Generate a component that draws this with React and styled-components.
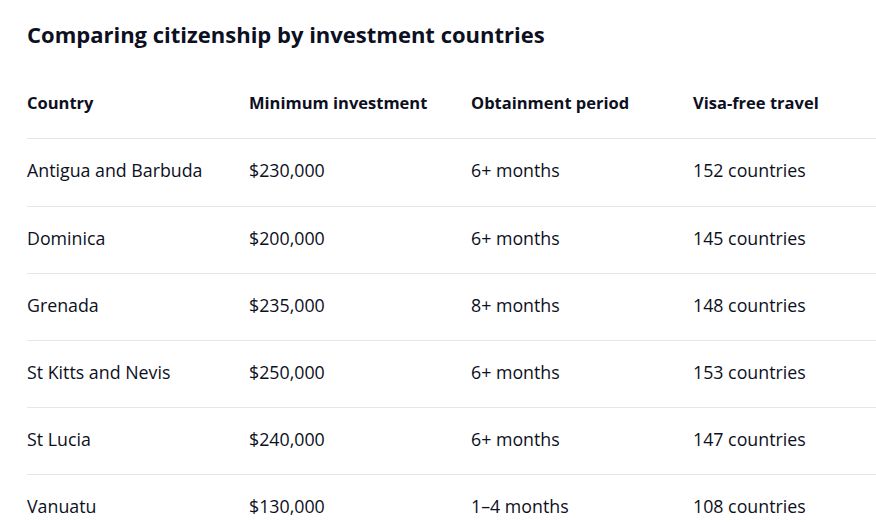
import styled, { createGlobalStyle } from "styled-components";

const GlobalStyle = createGlobalStyle`
  html, body {
    margin: 0;
    padding: 0;
    background: #ffffff;
    overflow: hidden;
  }
  body {
    font-family: "Open Sans", Lato, sans-serif;
    color: #0d0f22;
  }
`;

const Page = styled.div`
  padding: 20px 0 0 27px;
`;

const Title = styled.h2`
  margin: 0 0 20px 0;
  font-size: 22px;
  line-height: 28px;
  font-weight: 700;
  letter-spacing: 0;
`;

const Table = styled.table`
  width: 888px;
  table-layout: fixed;
  border-collapse: collapse;
`;

const Th = styled.th`
  text-align: left;
  font-size: 16.5px;
  line-height: 24px;
  font-weight: 700;
  letter-spacing: 0;
  padding: 23px 0;
  border-bottom: 1px solid #e6e6e6;
`;

const Td = styled.td`
  font-size: 17.8px;
  line-height: 24px;
  font-weight: 400;
  padding: ${(p) => (p.first ? "19px 0 24px" : "19px 0 23px")};
  border-bottom: 1px solid #e6e6e6;
`;

const columns = [
  "Country",
  "Minimum investment",
  "Obtainment period",
  "Visa-free travel",
];

const rows = [
  ["Antigua and Barbuda", "$230,000", "6+ months", "152 countries"],
  ["Dominica", "$200,000", "6+ months", "145 countries"],
  ["Grenada", "$235,000", "8+ months", "148 countries"],
  ["St Kitts and Nevis", "$250,000", "6+ months", "153 countries"],
  ["St Lucia", "$240,000", "6+ months", "147 countries"],
  ["Vanuatu", "$130,000", "1–4 months", "108 countries"],
];

const App = () => {
  return (
    <>
      <GlobalStyle />
      <Page>
        <Title>Comparing citizenship by investment countries</Title>
        <Table>
          <thead>
            <tr>
              {columns.map((c) => (
                <Th key={c}>{c}</Th>
              ))}
            </tr>
          </thead>
          <tbody>
            {rows.map((r, ri) => (
              <tr key={r[0]}>
                {r.map((cell, i) => (
                  <Td key={i} first={ri === 0}>
                    {cell}
                  </Td>
                ))}
              </tr>
            ))}
          </tbody>
        </Table>
      </Page>
    </>
  );
};

export default App;
